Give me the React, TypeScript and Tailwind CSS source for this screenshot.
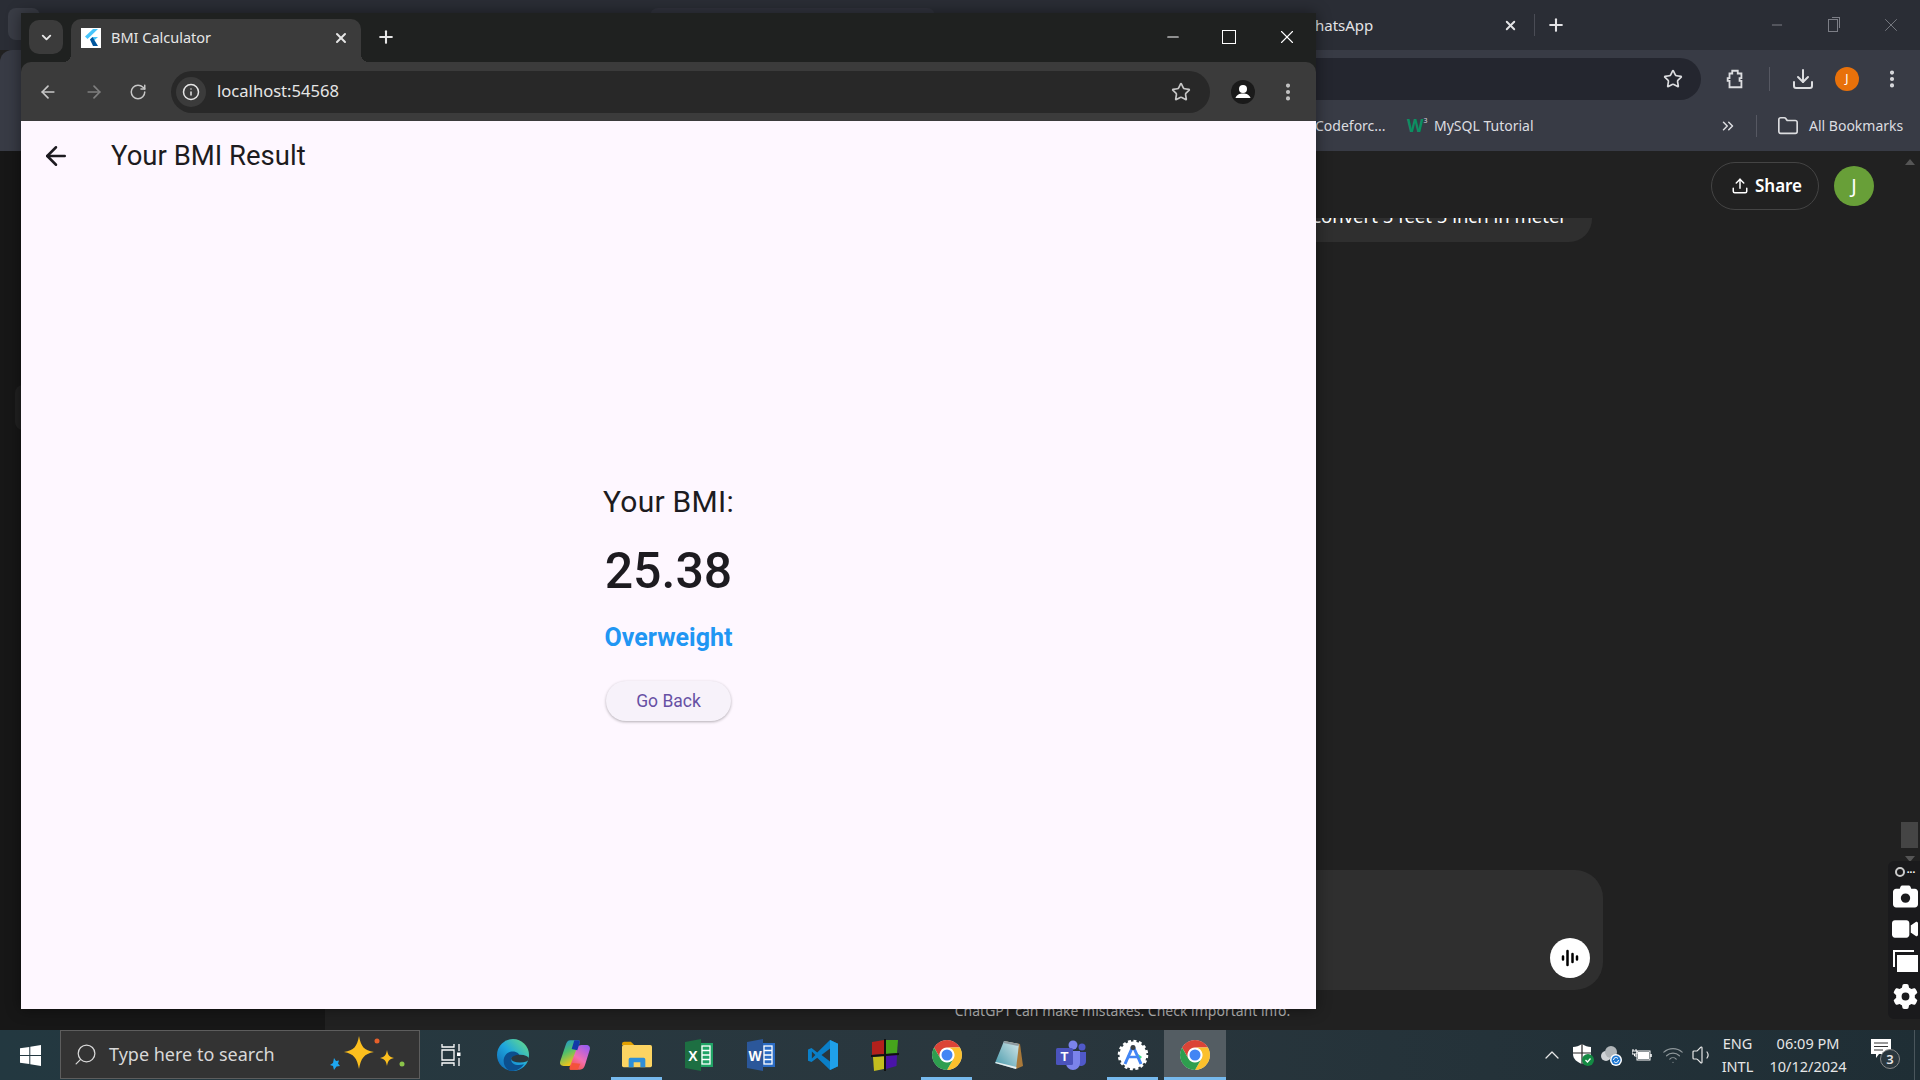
import type { ReactNode } from 'react';
import {
  ArrowLeft,
  ArrowRight,
  ChevronDown,
  ChevronUp,
  ChevronsRight,
  Download,
  EllipsisVertical,
  Folder,
  Info,
  Minus,
  Plus,
  RotateCw,
  Search,
  Star,
  Upload,
  Volume1,
  Wifi,
  X,
} from 'lucide-react';
import { FaCamera, FaVideo, FaGear } from 'react-icons/fa6';

function ChromeLogo() {
  const slice = 'M12 6h10.39A12 12 0 0 0 1.61 6L6.8 15A6 6 0 0 1 12 6Z';
  return (
    <svg width="30" height="30" viewBox="0 0 24 24">
      <circle cx="12" cy="12" r="11.8" fill="#fff" />
      <path d={slice} fill="#db4437" />
      <path d={slice} fill="#fbc02d" transform="rotate(120 12 12)" />
      <path d={slice} fill="#2e9e4f" transform="rotate(240 12 12)" />
      <circle cx="12" cy="12" r="5.6" fill="#fff" />
      <circle cx="12" cy="12" r="4.4" fill="#4285f4" />
    </svg>
  );
}

function EdgeLogo() {
  return (
    <svg width="32" height="32" viewBox="0 0 24 24">
      <defs>
        <linearGradient id="edgeOuter" x1="0" y1="1" x2="1" y2="0">
          <stop offset="0" stopColor="#0f62b0" />
          <stop offset="0.5" stopColor="#1ea6dd" />
          <stop offset="1" stopColor="#6fe37f" />
        </linearGradient>
      </defs>
      <circle cx="12" cy="12" r="12" fill="url(#edgeOuter)" />
      <path d="M9 23.6C3 20 4 11 10 9.6c4-1 7.5 1.4 7.2 4.2H11c-1.400 4 2 7 9.300 5.200C17 23.400 13 24.400 9 23.600Z" fill="#0c4f8e" />
      <ellipse cx="17.300" cy="14.800" rx="6.700" ry="2.900" fill="#2a373e" />
    </svg>
  );
}

function CopilotLogo() {
  return (
    <svg width="32" height="32" viewBox="0 0 24 24">
      <defs>
        <linearGradient id="copA" x1="0" y1="0" x2="0.4" y2="1">
          <stop offset="0" stopColor="#1b8ae0" />
          <stop offset="0.5" stopColor="#4fc06c" />
          <stop offset="1" stopColor="#f5c518" />
        </linearGradient>
        <linearGradient id="copB" x1="0.8" y1="0" x2="0.2" y2="1">
          <stop offset="0" stopColor="#9a5cf0" />
          <stop offset="0.55" stopColor="#f26fb1" />
          <stop offset="1" stopColor="#f4523b" />
        </linearGradient>
      </defs>
      <path d="M8.500 1h6c1.200 0 1.400 1 1 2l-5 15c-.6 1.600-1.500 2.200-3 2.200H3.500C1.200 20.200.3 18.500 1 16.500L5 4.500C5.700 2.300 6.700 1 8.500 1Z" fill="url(#copA)" />
      <path d="M17 4.500h3.500c2.200 0 3.200 1.700 2.500 3.800L19.500 19.500c-.7 2.200-1.900 3.500-3.800 3.500H9c-1.200 0-1.400-1-1-2L13.500 6.500c.4-1.200 1.800-2 3.500-2Z" fill="url(#copB)" />
      <path d="M11.500 1h3c1.200 0 1.400 1 1 2l-1.800 5.500-4.200-1Z" fill="#1238a8" />
      <path d="M8 23h6l2-4.500-6-.5Z" fill="#f4523b" />
    </svg>
  );
}

function ExplorerLogo() {
  return (
    <svg width="30" height="28" viewBox="0 0 27 24">
      <path d="M0 2a2 2 0 0 1 2-2h6l3 3H0Z" fill="#e2a000" />
      <rect y="3" width="27" height="20" rx="1.500" fill="#fcd462" />
      <path d="M6 23v-7a1.500 1.500 0 0 1 1.500-1.500h12A1.500 1.500 0 0 1 21 16v7h-4.500v-4.500h-6V23Z" fill="#2e8fd8" />
    </svg>
  );
}

function OfficeLogo({ letter, dark, light }: { letter: string; dark: string; light: string }) {
  return (
    <svg width="28" height="32" viewBox="0 0 28 32">
      <rect x="11" y="4" width="17" height="24" fill={light} />
      <g stroke="#fff" strokeWidth="1.300">
        <rect x="17" y="7" width="8" height="18" fill="none" />
        <path d="M17 11.500h8M17 16h8M17 20.500h8" />
      </g>
      <path d="M0 3 16 0v32L0 29Z" fill={dark} />
      <text x="8" y="21.500" textAnchor="middle" fontSize="14" fontWeight="700" fontFamily="Liberation Sans, sans-serif" fill="#fff">
        {letter}
      </text>
    </svg>
  );
}

function VsCodeLogo() {
  return (
    <svg width="30" height="30" viewBox="0 0 24 24">
      <path d="M17.600 0 24 3v18l-6.400 3-10.200-9.900-4.600 3.500L0 16.500v-9l2.800-1.100 4.600 3.500Z" fill="#0a7fc8" />
      <path d="M17.600 0 24 3v18l-6.400 3Z" fill="#1fa0ea" />
      <path d="M17.600 6.800v10.400L10.800 12Z" fill="#2a373e" />
      <path d="M3.100 9.200v5.600L5.900 12Z" fill="#2a373e" />
    </svg>
  );
}

function BlocksLogo() {
  return (
    <svg width="28" height="34" viewBox="0 0 28 34">
      <path d="M1 4 13 2v14L1 17Z" fill="#b3201c" />
      <path d="M15 2h12l-1 13-11 1Z" fill="#46a51c" />
      <path d="M2 19l11-1v13L3 33Z" fill="#c3bd1e" />
      <path d="M15 18l11-2-.5 12-10.500 3Z" fill="#4a14a8" />
      <path d="M13 1h2v32h-2ZM0 17l28-2v2L0 19Z" fill="#111" />
    </svg>
  );
}

function NotepadLogo() {
  return (
    <svg width="30" height="32" viewBox="0 0 30 32">
      <defs>
        <linearGradient id="padFill" x1="0" y1="1" x2="1" y2="0">
          <stop offset="0" stopColor="#3f95a8" />
          <stop offset="1" stopColor="#d6e8ea" />
        </linearGradient>
      </defs>
      <path d="M10 2 26 5l3 22-7 3Z" fill="#a9793a" />
      <path d="M10 2 25 5l-3 25L1 24Z" fill="url(#padFill)" />
      <path d="M10 2 25 5l-.4 2L9.500 4Z" fill="#8e9aa0" />
      <path d="M22 30 1 24l1-1 20.500 5Z" fill="#e9eeee" />
    </svg>
  );
}

function TeamsLogo() {
  return (
    <svg width="32" height="32" viewBox="0 0 32 32">
      <circle cx="18" cy="6" r="4.500" fill="#7b83eb" />
      <circle cx="27" cy="8" r="3.500" fill="#5059c9" />
      <path d="M22 13h9v9a5 5 0 0 1-9 3Z" fill="#5059c9" />
      <path d="M11 12h14v12a7 7 0 0 1-14 0Z" fill="#7b83eb" />
      <rect x="1" y="9" width="17" height="17" rx="1.500" fill="#4b53bc" />
      <text x="9.500" y="22" textAnchor="middle" fontSize="13" fontWeight="700" fontFamily="Liberation Sans, sans-serif" fill="#fff">
        T
      </text>
    </svg>
  );
}

function StudioLogo() {
  return (
    <svg width="32" height="32" viewBox="0 0 32 32">
      <circle cx="16" cy="16" r="13.500" fill="#fff" />
      <circle cx="16" cy="16" r="14" fill="none" stroke="#fff" strokeWidth="2.500" strokeDasharray="3 2.500" />
      <path d="M21 15l4 3-3 3Z" fill="#3ddc84" />
      <path d="M16 7 8 25M16 7l8 18" stroke="#4285f4" strokeWidth="3" fill="none" />
      <path d="M10 18h12" stroke="#4285f4" strokeWidth="2.500" />
      <circle cx="16" cy="8.500" r="2.500" fill="#3c4043" />
    </svg>
  );
}

function FlutterIcon() {
  return (
    <div className="flex h-5 w-5 items-center justify-center bg-white">
      <svg width="14" height="17" viewBox="0 0 14 17">
        <path d="M9 0h5L3.500 10 1 7.500Z" fill="#47c5fb" />
        <path d="M9 8h5L8.500 13 6 10.500Z" fill="#47c5fb" />
        <path d="M6 10.500 8.500 8 14 17H9Z" fill="#00569e" />
      </svg>
    </div>
  );
}

function TaskSlot({ children, running, active }: { children: ReactNode; running?: boolean; active?: boolean }) {
  return (
    <div className={`relative flex h-full w-[62px] items-center justify-center ${active ? 'bg-[#545d63]' : ''}`}>
      {children}
      {running && <span className={`absolute bottom-0 h-[3px] bg-[#76b9ed] ${active ? 'inset-x-0' : 'left-[5px] right-[6px]'}`} />}
    </div>
  );
}

function FrontWindow() {
  return (
    <div className="absolute left-[21px] top-[13px] flex h-[996px] w-[1295px] flex-col bg-[#1f2120] shadow-[0_0_14px_rgba(0,0,0,0.45)]">
      {/* tab strip */}
      <div className="flex h-[49px] shrink-0 items-end pl-2 text-[#e6e6e6]">
        <div className="mb-[8px] flex h-[34px] w-[34px] items-center justify-center rounded-[10px] bg-[#3b3b3b]">
          <ChevronDown size={15} strokeWidth={3} />
        </div>
        <div className="relative ml-2 flex h-[43px] w-[290px] items-center rounded-t-[10px] bg-[#3b3b3b] pb-[6px] pl-[10px] pr-[12px]">
          <FlutterIcon />
          <span className="ml-[10px] flex-1 text-[14.500px]">BMI Calculator</span>
          <X size={16} strokeWidth={3} />
          <span className="absolute -left-2 bottom-0 h-2 w-2 bg-[radial-gradient(circle_at_0_0,transparent_8px,#3b3b3b_8px)]" />
          <span className="absolute -right-2 bottom-0 h-2 w-2 bg-[radial-gradient(circle_at_100%_0,transparent_8px,#3b3b3b_8px)]" />
        </div>
        <Plus size={20} strokeWidth={2.500} className="mb-[15px] ml-[15px]" />
        <div className="ml-auto mb-[14px] flex w-[152px] items-center justify-between pr-[18px]">
          <Minus size={18} strokeWidth={1.500} className="text-white" />
          <span className="h-[14px] w-[14px] border-[1.500px] border-white" />
          <X size={22} strokeWidth={1.200} className="text-white" />
        </div>
      </div>
      {/* toolbar */}
      <div className="flex h-[59px] shrink-0 items-center rounded-t-[10px] bg-[#3b3b3b] pl-[17px] text-[#c7c7c7]">
        <ArrowLeft size={20} strokeWidth={2} />
        <ArrowRight size={20} strokeWidth={2} className="ml-[26px] text-[#7f7f7f]" />
        <RotateCw size={18} strokeWidth={2} className="ml-[25px]" />
        <div className="ml-[24px] flex h-[42px] w-[1039px] items-center rounded-full bg-[#282828] pl-[5px] pr-[19px]">
          <div className="flex h-[30px] w-[30px] items-center justify-center rounded-full bg-[#3b3b3b]">
            <Info size={18} className="text-[#e6e6e6]" />
          </div>
          <span className="ml-[11px] flex-1 text-[16.600px] text-[#e6e6e6]">localhost:54568</span>
          <Star size={20} strokeWidth={2} />
        </div>
        <div className="ml-[21px] flex h-6 w-6 items-center justify-center overflow-hidden rounded-full bg-[#1a1a1a]">
          <svg width="24" height="24" viewBox="0 0 24 24" fill="#fff">
            <circle cx="12" cy="9" r="4" />
            <path d="M4.500 18c1-3.300 4-4.500 7.500-4.500s6.500 1.200 7.500 4.500Z" />
          </svg>
        </div>
        <EllipsisVertical size={22} strokeWidth={2.500} className="ml-[22px]" />
      </div>
      {/* flutter page */}
      <div className="flex min-h-0 flex-1 flex-col bg-[#fef7ff] font-['Roboto',sans-serif] text-[#1d1b20]">
        <div className="flex h-[70px] shrink-0 items-center pl-[20px]">
          <ArrowLeft size={30} strokeWidth={2} />
          <span className="ml-[40px] text-[27.500px]">Your BMI Result</span>
        </div>
        <div className="flex flex-1 flex-col items-center justify-center">
          <span className="text-[30px] leading-[44px] tracking-[0.25px]">Your BMI:</span>
          <span className="mt-[14px] text-[50px] font-medium leading-[66px]">25.38</span>
          <span className="mt-[17px] text-[25px] font-bold leading-[33px] text-[#2196f3]">Overweight</span>
          <button className="mt-[27px] h-[40px] w-[125px] rounded-full bg-[#f7f2fa] pt-[1px] text-[17.500px] text-[#6750a4] shadow-[0_1px_3px_rgba(0,0,0,0.3)]">
            Go Back
          </button>
        </div>
      </div>
    </div>
  );
}

function BackWindow() {
  return (
    <div className="flex min-h-0 flex-1 flex-col bg-[#212121] text-[#dcdde0]">
      <div className="relative flex h-[50px] shrink-0 items-center bg-[#2a2d35] pl-[1301px] text-[15px] text-[#e3e3e6]">
        <span className="absolute left-[650px] top-[8px] h-[10px] w-[285px] rounded-t-lg bg-[#31333d]" />
        <span className="absolute left-[8px] top-[8px] h-[32px] w-[32px] rounded-lg bg-[#3a3d46]" />
        <span className="w-[202px]">WhatsApp</span>
        <X size={15} strokeWidth={3} />
        <span className="ml-[16px] h-[22px] w-px bg-[#4a4c55]" />
        <Plus size={20} strokeWidth={2.500} className="ml-[11px]" />
        <div className="ml-[203px] flex w-[133px] items-center justify-between text-[#7c7e86]">
          <Minus size={16} strokeWidth={1.500} />
          <span className="relative h-[13px] w-[10px] border border-[#7c7e86] shadow-[2px_-2px_0_-1px_#2a2d35,3px_-3px_0_-1px_#7c7e86]" />
          <X size={22} strokeWidth={1} />
        </div>
      </div>
      <div className="flex h-[101px] shrink-0 flex-col rounded-tl-xl bg-[#383b45]">
        <div className="mt-[8px] flex h-[42px] shrink-0 items-center">
          <div className="ml-[1000px] flex h-full w-[701px] items-center justify-end rounded-full bg-[#24262f] pr-[18px]">
            <Star size={20} strokeWidth={2} />
          </div>
          <svg width="22" height="22" viewBox="0 0 24 24" fill="none" stroke="currentColor" strokeWidth="2" className="ml-[23px]">
            <path d="M9 3h6v3h4v5h-2v3h2v7H6v-7H4v-3h2V6h3Z" />
          </svg>
          <span className="ml-[23px] h-6 w-px bg-[#565862]" />
          <Download size={24} strokeWidth={2} className="ml-[21px]" />
          <span className="ml-[20px] flex h-6 w-6 items-center justify-center rounded-full bg-[#e8710a] text-[12px] text-white">J</span>
          <EllipsisVertical size={22} strokeWidth={2.500} className="ml-[22px]" />
        </div>
        <div className="flex flex-1 items-center pl-[1315px] text-[14px]">
          <span className="w-[92px]">Codeforc...</span>
          <span className="flex w-[24px] items-start font-bold leading-none text-[#0b8f62]">
            <span className="text-[17px]">W</span>
            <span className="text-[7px] font-normal text-[#dcdde0]">3</span>
          </span>
          <span className="ml-[3px] w-[285px]">MySQL Tutorial</span>
          <ChevronsRight size={18} />
          <span className="ml-[19px] h-[22px] w-px bg-[#565862]" />
          <Folder size={22} strokeWidth={1.800} className="ml-[20px]" />
          <span className="ml-[10px]">All Bookmarks</span>
        </div>
      </div>
      <div className="flex min-h-0 flex-1">
        <div className="w-[325px] shrink-0 bg-[#171717]" />
        <div className="flex min-w-0 flex-1 flex-col font-['Noto_Sans',sans-serif]">
          <div className="flex h-[67px] shrink-0 items-start justify-end pr-[46px] pt-[11px]">
            <div className="flex h-[48px] w-[108px] items-center justify-center gap-[6px] rounded-full border border-[#444] pl-[3px] text-[17px] font-semibold text-white">
              <Upload size={18} />
              Share
            </div>
            <div className="ml-[15px] mt-[4px] flex h-10 w-10 items-center justify-center rounded-full bg-[#689f38] text-[20px] text-white">J</div>
          </div>
          <div className="flex h-[24px] shrink-0 flex-col justify-end overflow-hidden pr-[328px]">
            <div className="ml-auto flex h-[46px] shrink-0 items-center rounded-[24px] bg-[#2f2f2f] px-[25px] pb-[6px] text-[18.500px] text-white">
              convert 5 feet 5 inch in meter
            </div>
          </div>
          <div className="flex flex-1 flex-col items-center justify-end">
            <div className="flex h-[120px] w-[960px] items-end justify-end rounded-[28px] bg-[#2f2f2f] pb-[12px] pr-[13px]">
              <div className="flex h-10 w-10 items-center justify-center rounded-full bg-white">
                <svg width="24" height="24" viewBox="0 0 24 24" stroke="#000" strokeWidth="2.500" strokeLinecap="round">
                  <path d="M5 10.500v3M9.500 5v14M14.500 8v8M19 10.500v3" />
                </svg>
              </div>
            </div>
            <div className="flex h-[40px] shrink-0 items-center text-[14px] text-[#b4b4b4]">ChatGPT can make mistakes. Check important info.</div>
          </div>
        </div>
      </div>
    </div>
  );
}

function SideTools() {
  return (
    <>
      <span className="absolute left-[15px] top-[385px] h-[45px] w-[8px] rounded-l-lg bg-[#212121]" />
      <span className="absolute left-[1905px] top-[159px] h-0 w-0 border-x-[5px] border-b-[6px] border-x-transparent border-b-[#555]" />
      <span className="absolute left-[1901px] top-[822px] h-[26px] w-[17px] bg-[#454545]" />
      <span className="absolute left-[1905px] top-[856px] h-0 w-0 border-x-[5px] border-t-[6px] border-x-transparent border-t-[#555]" />
      <div className="absolute left-[1888px] top-[861px] flex h-[158px] w-[32px] flex-col items-center rounded-l-md bg-[#1a1a1c] pl-[2px] pt-[4px] text-white">
        <div className="flex h-[14px] w-full items-center justify-center gap-[2px]">
          <span className="h-[10px] w-[10px] rounded-full border-2 border-[#ccc]" />
          <span className="text-[10px] font-bold leading-none">···</span>
        </div>
        <FaCamera size={25} className="mt-[5px]" />
        <FaVideo size={26} className="mt-[7px]" />
        <div className="relative mt-[8px] h-[22px] w-[25px]">
          <span className="absolute left-0 top-0 h-[17px] w-[21px] border-l-2 border-t-2 border-white" />
          <span className="absolute bottom-0 right-0 h-[17px] w-[21px] bg-white" />
        </div>
        <FaGear size={25} className="mt-[12px]" />
      </div>
    </>
  );
}

function Taskbar() {
  return (
    <div className="flex h-[50px] shrink-0 items-center bg-gradient-to-r from-[#233840] via-[#2a373e] to-[#1f2e35] text-white">
      <div className="flex w-[60px] justify-center">
        <svg width="21" height="21" viewBox="0 0 21 21" fill="#fff">
          <path d="M0 3.200 9.300 2v8H0ZM10.300 1.800 21 0v10h-10.700ZM0 11h9.300v8L0 17.800ZM10.300 11H21v10l-10.700-1.800Z" />
        </svg>
      </div>
      <div className="flex h-[49px] w-[360px] items-center self-start border border-[#5d5d5d] bg-[#333] pl-[12px] font-['Noto_Sans',sans-serif] text-[#d8d8d8]">
        <Search size={25} strokeWidth={1.200} className="-scale-x-100" />
        <span className="ml-[11px] text-[18px]">Type here to search</span>
        <svg width="82" height="42" viewBox="0 0 82 42" className="ml-auto mr-[8px]">
          <path d="M30 2c2 11 5 14 15 16-10 2-13 6-15 17-2-11-5-15-15-17 10-2 13-5 15-16Z" fill="#fcbf1e" />
          <path d="M58 16c1 5 2 7 7 8-5 1-6 3-7 8-1-5-2-7-7-8 5-1 6-3 7-8Z" fill="#fcbf1e" />
          <path d="M5 24l2 3 3-.5-1 3 2 2.500-3.500.5L5 36l-1-4-3-1 3-2Z" fill="#1ea7f0" />
          <circle cx="48" cy="7" r="2.500" fill="#e8602a" />
          <circle cx="73" cy="30" r="2.500" fill="#8bc34a" />
        </svg>
      </div>
      <TaskSlot>
        <svg width="20" height="24" viewBox="0 0 20 24" fill="none" stroke="#fff" strokeWidth="1.300">
          <path d="M1 1v3h12V1M1 7h12v10H1ZM1 23v-3h12v3M18 1v7M18 15v8" />
          <rect x="16" y="9.500" width="3.500" height="3.500" fill="#fff" stroke="none" />
        </svg>
      </TaskSlot>
      <TaskSlot><EdgeLogo /></TaskSlot>
      <TaskSlot><CopilotLogo /></TaskSlot>
      <TaskSlot running><ExplorerLogo /></TaskSlot>
      <TaskSlot><OfficeLogo letter="X" dark="#1d6f42" light="#21a366" /></TaskSlot>
      <TaskSlot><OfficeLogo letter="W" dark="#2b579a" light="#2b6cc4" /></TaskSlot>
      <TaskSlot><VsCodeLogo /></TaskSlot>
      <TaskSlot><BlocksLogo /></TaskSlot>
      <TaskSlot running><ChromeLogo /></TaskSlot>
      <TaskSlot><NotepadLogo /></TaskSlot>
      <TaskSlot><TeamsLogo /></TaskSlot>
      <TaskSlot running><StudioLogo /></TaskSlot>
      <TaskSlot running active><ChromeLogo /></TaskSlot>
      <div className="ml-[314px] flex h-full flex-1 items-center font-['Noto_Sans',sans-serif] text-[14.500px] text-[#e6e6e6]">
        <ChevronUp size={24} strokeWidth={1.300} />
        <svg width="22" height="24" viewBox="0 0 22 24" className="ml-[8.500px]">
          <path d="M9 1c3 2 6 3 9 3v7c0 5-4 8-9 10-5-2-9-5-9-10V4c3 0 6-1 9-3Z" fill="#fff" />
          <path d="M9 1v20M0 10h18" stroke="#222" strokeWidth="1.200" />
          <circle cx="15" cy="17" r="6" fill="#138a43" />
          <path d="M12.500 17l2 2 3-3.500" stroke="#fff" strokeWidth="1.300" fill="none" />
        </svg>
        <svg width="24" height="22" viewBox="0 0 24 22" className="ml-[3px]">
          <circle cx="8" cy="12" r="5" fill="#cfd3d6" />
          <circle cx="13" cy="8" r="6" fill="#b0b5b8" />
          <circle cx="18" cy="16" r="6" fill="#fff" />
          <circle cx="18" cy="16" r="4.500" fill="#1f78d1" />
          <path d="M15.500 16a2.500 2.500 0 0 1 4.500-1.500M20.500 16a2.500 2.500 0 0 1-4.500 1.500" stroke="#fff" fill="none" />
        </svg>
        <svg width="20" height="16" viewBox="0 0 20 16" fill="none" stroke="#fff" className="ml-[10px]">
          <path d="M1 2v2M4 2v2M0 4h5v3H0ZM2.500 7v2H5" />
          <rect x="5" y="4" width="13" height="9" />
          <rect x="6.500" y="5.500" width="10" height="6" fill="#fff" />
          <path d="M19 7v3" strokeWidth="1.500" />
        </svg>
        <Wifi size={22} strokeWidth={1.300} className="ml-[10px] text-[#8f979b]" />
        <Volume1 size={24} strokeWidth={1.200} className="ml-[7px]" />
        <div className="ml-[5px] flex w-[36px] flex-col items-center leading-[23px]">
          <span>ENG</span>
          <span>INTL</span>
        </div>
        <div className="ml-[6.500px] flex w-[92px] flex-col items-center leading-[23px]">
          <span>06:09 PM</span>
          <span>10/12/2024</span>
        </div>
        <div className="relative ml-[17px] h-[32px] w-[32px]">
          <svg width="22" height="20" viewBox="0 0 22 20" className="absolute left-0 top-[0px]">
            <path d="M0 0h20v15H8l-3 4v-4H0Z" fill="#fff" />
            <path d="M3 4h14M3 7.500h14M3 11h9" stroke="#333" strokeWidth="1" />
          </svg>
          <span className="absolute left-[9px] top-[10px] flex h-5 w-5 items-center justify-center rounded-full border border-[#888] bg-[#2a373e] text-[13px] font-semibold leading-none">3</span>
        </div>
        <span className="ml-auto mr-[5px] h-full w-px bg-[#4a565c]" />
      </div>
    </div>
  );
}

export default function App() {
  return (
    <div className="relative flex h-[1080px] w-[1920px] flex-col overflow-hidden bg-[#212121] font-['Noto_Sans',sans-serif]">
      <BackWindow />
      <Taskbar />
      <SideTools />
      <FrontWindow />
    </div>
  );
}
